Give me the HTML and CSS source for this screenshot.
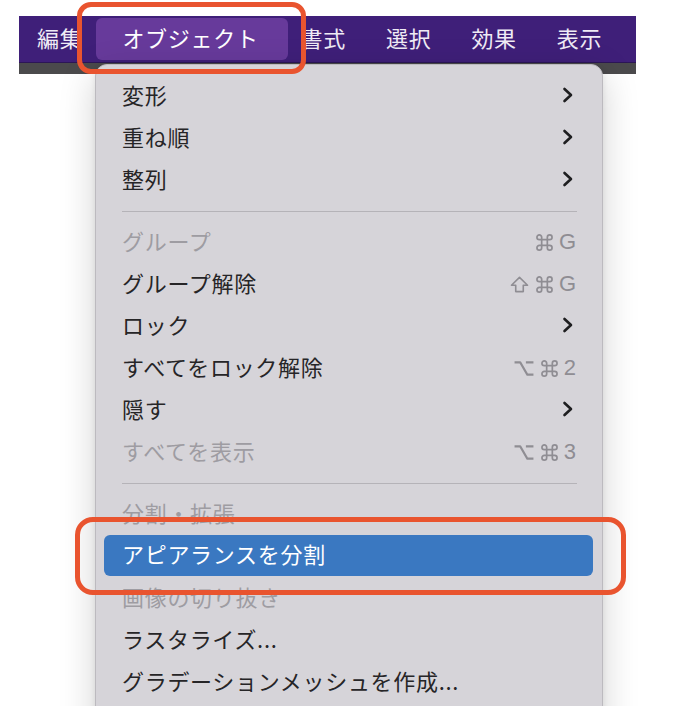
FILE: index.html
```html
<!DOCTYPE html>
<html lang="ja">
<head>
<meta charset="utf-8">
<link rel="stylesheet" href="styles.css">
</head>
<body>
<div class="stage">
  <div class="menubar">
    <span class="mb-item first">編集</span>
    <span class="mb-item active">オブジェクト</span>
    <span class="mb-item after-active">書式</span>
    <span class="mb-item">選択</span>
    <span class="mb-item">効果</span>
    <span class="mb-item">表示</span>
  </div>
  <div class="strip"></div>

  <div class="panel">
    <div class="row"><span class="label">変形</span><svg class="chev" viewBox="0 0 12 16"><path d="M2.5 2 L9 8 L2.5 14"/></svg></div>
    <div class="row"><span class="label">重ね順</span><svg class="chev" viewBox="0 0 12 16"><path d="M2.5 2 L9 8 L2.5 14"/></svg></div>
    <div class="row"><span class="label">整列</span><svg class="chev" viewBox="0 0 12 16"><path d="M2.5 2 L9 8 L2.5 14"/></svg></div>
    <div class="sep"></div>
    <div class="row disabled"><span class="label">グループ</span><span class="sc"><svg class="key cmd" viewBox="0 0 20 18"><path d="M7 6 V3.5 A2.5 2.5 0 1 0 4.5 6 H15.5 A2.5 2.5 0 1 0 13 3.5 V14.5 A2.5 2.5 0 1 0 15.5 12 H4.5 A2.5 2.5 0 1 0 7 14.5 Z"/></svg><span class="ch">G</span></span></div>
    <div class="row"><span class="label">グループ解除</span><span class="sc"><svg class="key shift" viewBox="0 0 21 18"><path d="M10.5 1.5 L19 9.8 H14.5 V16.5 H6.5 V9.8 H2 Z"/></svg><svg class="key cmd" viewBox="0 0 20 18"><path d="M7 6 V3.5 A2.5 2.5 0 1 0 4.5 6 H15.5 A2.5 2.5 0 1 0 13 3.5 V14.5 A2.5 2.5 0 1 0 15.5 12 H4.5 A2.5 2.5 0 1 0 7 14.5 Z"/></svg><span class="ch">G</span></span></div>
    <div class="row"><span class="label">ロック</span><svg class="chev" viewBox="0 0 12 16"><path d="M2.5 2 L9 8 L2.5 14"/></svg></div>
    <div class="row"><span class="label">すべてをロック解除</span><span class="sc"><svg class="key opt" viewBox="0 0 22 18"><path d="M1 2.5 H7 L14.5 15.5 H21 M13 2.5 H21"/></svg><svg class="key cmd" viewBox="0 0 20 18"><path d="M7 6 V3.5 A2.5 2.5 0 1 0 4.5 6 H15.5 A2.5 2.5 0 1 0 13 3.5 V14.5 A2.5 2.5 0 1 0 15.5 12 H4.5 A2.5 2.5 0 1 0 7 14.5 Z"/></svg><span class="ch">2</span></span></div>
    <div class="row"><span class="label">隠す</span><svg class="chev" viewBox="0 0 12 16"><path d="M2.5 2 L9 8 L2.5 14"/></svg></div>
    <div class="row disabled"><span class="label">すべてを表示</span><span class="sc"><svg class="key opt" viewBox="0 0 22 18"><path d="M1 2.5 H7 L14.5 15.5 H21 M13 2.5 H21"/></svg><svg class="key cmd" viewBox="0 0 20 18"><path d="M7 6 V3.5 A2.5 2.5 0 1 0 4.5 6 H15.5 A2.5 2.5 0 1 0 13 3.5 V14.5 A2.5 2.5 0 1 0 15.5 12 H4.5 A2.5 2.5 0 1 0 7 14.5 Z"/></svg><span class="ch">3</span></span></div>
    <div class="sep"></div>
    <div class="row disabled"><span class="label">分割・拡張</span></div>
    <div class="row selected"><span class="label">アピアランスを分割</span></div>
    <div class="row disabled"><span class="label">画像の切り抜き</span></div>
    <div class="row"><span class="label">ラスタライズ...</span></div>
    <div class="row"><span class="label">グラデーションメッシュを作成...</span></div>
  </div>

  <div class="mark mark-top"></div>
  <div class="mark mark-item"></div>
</div>
</body>
</html>
```

FILE: styles.css
```css
html, body {
  margin: 0;
  padding: 0;
  background: #ffffff;
  overflow: hidden;
  height: 706px;
}

.stage {
  position: relative;
  width: 700px;
  height: 706px;
  padding-top: 16px;
  box-sizing: border-box;
  font-family: "Noto Sans CJK JP", "Noto Sans", sans-serif;
  overflow: hidden;
}

.menubar {
  margin-left: 19px;
  width: 617px;
  height: 47px;
  background: #3f1f79;
  display: flex;
  align-items: center;
  padding-left: 18px;
  box-sizing: border-box;
  border-bottom: 1px solid #2c1656;
}

.mb-item {
  color: #efebf5;
  font-size: 22px;
  letter-spacing: 0.7px;
  line-height: 30px;
  margin-left: 40px;
  padding-bottom: 4px;
}

.mb-item.first {
  margin-left: 0;
}

.mb-item.active {
  margin-left: 14px;
  background: #673a9b;
  color: #ffffff;
  height: 42px;
  line-height: 38px;
  padding: 0 29px 4px 26px;
  box-sizing: border-box;
  border-radius: 6px;
}

.mb-item.after-active {
  margin-left: 13px;
}

.strip {
  margin-left: 19px;
  width: 617px;
  height: 11px;
  background: #4b4a4c;
}

.panel {
  position: absolute;
  left: 95px;
  top: 64px;
  width: 508px;
  height: 720px;
  box-sizing: border-box;
  background: #d6d4d9;
  border: 1px solid #bcbabf;
  border-radius: 12px;
  padding: 10px 9px 0 8px;
  box-shadow: 0 10px 36px rgba(0, 0, 0, 0.18), 0 2px 6px rgba(0, 0, 0, 0.08);
}

.row {
  height: 42px;
  display: flex;
  align-items: center;
  justify-content: space-between;
  padding: 0 17px 0 18px;
  border-radius: 6px;
  color: #262527;
  font-size: 22px;
  letter-spacing: 0.7px;
}

.label {
  line-height: 30px;
  white-space: nowrap;
  margin-bottom: 5px;
}

.row.disabled {
  color: #9e9ca2;
}

.row.selected {
  background: #3a78c1;
  color: #ffffff;
  height: 41px;
  margin: 0 0 1px 0;
}

.chev {
  width: 12px;
  height: 16px;
  margin-right: 2px;
  margin-bottom: 2px;
  fill: none;
  stroke: #1e1e20;
  stroke-width: 2.6;
  stroke-linecap: round;
  stroke-linejoin: round;
}

.sc {
  display: flex;
  align-items: center;
  gap: 5px;
  color: #8f8d93;
  letter-spacing: 0;
}

.key {
  height: 17px;
  fill: none;
  stroke: #8f8d93;
  stroke-width: 1.9;
  stroke-linejoin: round;
}

.key.cmd {
  width: 19px;
  stroke-width: 1.8;
}

.key.shift {
  width: 21px;
  stroke-width: 1.7;
}

.key.opt {
  width: 22px;
  stroke-width: 2.2;
}

.ch {
  font-family: "Liberation Sans", Arial, sans-serif;
  font-size: 22px;
  line-height: 24px;
  margin-bottom: 1px;
}

.sep {
  height: 20px;
  display: flex;
  align-items: center;
  padding: 0 16px 0 18px;
}

.sep::before {
  content: "";
  display: block;
  width: 100%;
  height: 1px;
  background: #b5b3b8;
}

.mark {
  position: absolute;
  border: 5px solid #e9542f;
  box-sizing: border-box;
}

.mark-top {
  left: 77px;
  top: 2px;
  width: 229px;
  height: 72px;
  border-radius: 14px;
}

.mark-item {
  left: 75px;
  top: 517px;
  width: 551px;
  height: 78px;
  border-radius: 18px;
}
```
